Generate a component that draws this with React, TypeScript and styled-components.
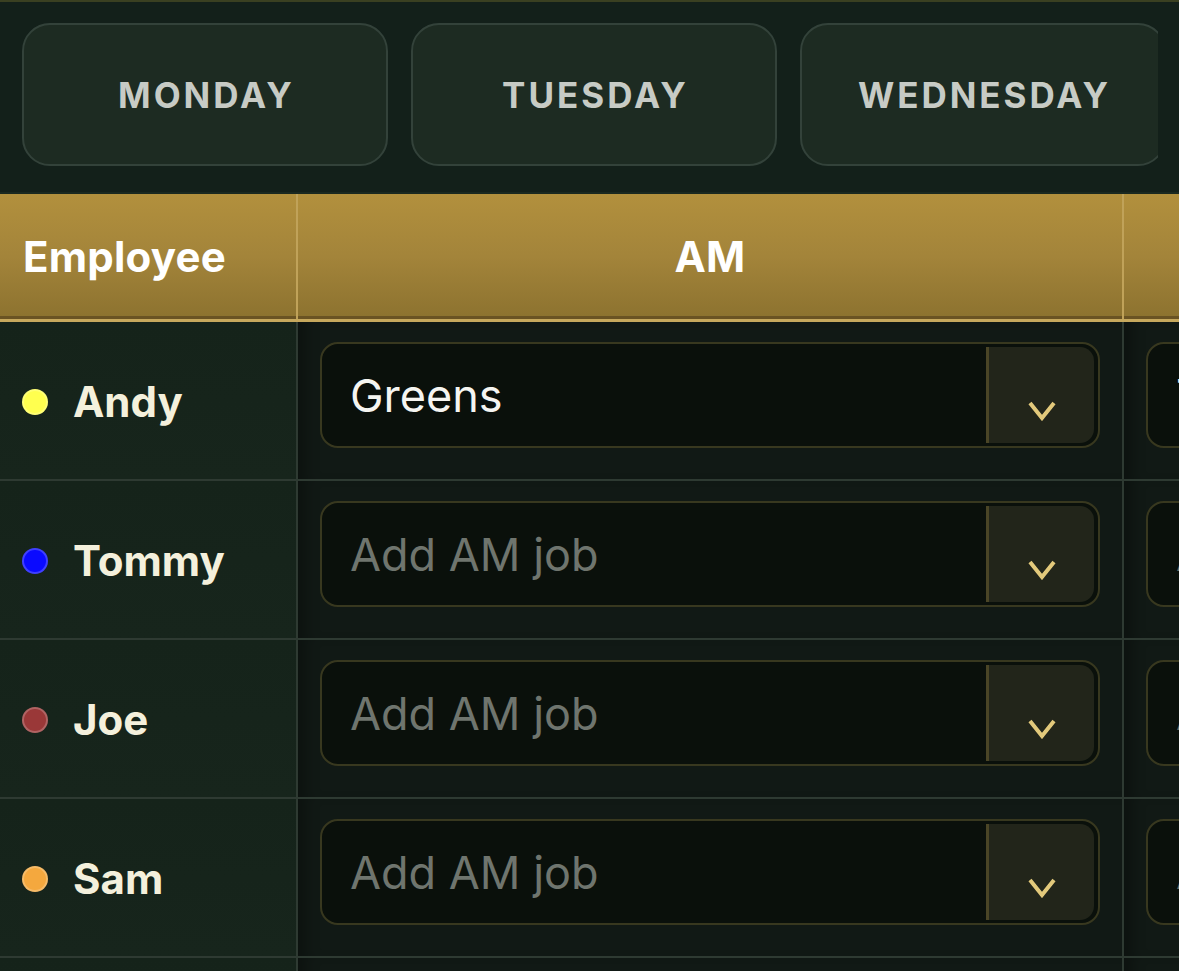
import React from "react";
import styled, { createGlobalStyle } from "styled-components";

const GlobalStyle = createGlobalStyle`
  html, body {
    margin: 0;
    padding: 0;
    background: #111915;
    font-family: "Inter", "Liberation Sans", sans-serif;
  }
  * {
    box-sizing: border-box;
  }
`;

const Page = styled.div`
  width: 1179px;
  height: 971px;
  overflow: hidden;
  background: #111915;
`;

const DayBar = styled.div`
  border-top: 2px solid #3a4021;
  border-bottom: 2px solid #1b2920;
  background: #13201a;
  padding: 21px 21px 26px 22px;
`;

const DayTabs = styled.div`
  display: flex;
  gap: 23px;
  overflow: hidden;
`;

const DayTab = styled.button`
  flex: 0 0 366px;
  height: 143px;
  border-radius: 28px;
  border: 2px solid #33423a;
  background: #1d2b22;
  color: #c7cbc5;
  font-family: "Inter", "Liberation Sans", sans-serif;
  font-weight: 700;
  font-size: 35px;
  letter-spacing: 0.085em;
  text-transform: uppercase;
  display: flex;
  align-items: center;
  justify-content: center;
  padding: 0 0 0 3px;
`;

const Table = styled.div`
  width: 1950px;
`;

const Row = styled.div`
  display: grid;
  grid-template-columns: 298px 826px 826px;
`;

const HeaderRow = styled(Row)`
  height: 128px;
  background: linear-gradient(180deg, #b2903d 0%, #a3843a 50%, #8c722f 100%);
  border-bottom: 3px solid #c6a85d;
  box-shadow: inset 0 -3px 0 #6a5323;
`;

const HeaderCell = styled.div<{ $center?: boolean }>`
  display: flex;
  align-items: center;
  justify-content: ${(p) => (p.$center ? "center" : "flex-start")};
  padding: 0 ${(p) => (p.$center ? "0" : "23px")};
  border-right: 2px solid #c0a259;
  color: #ffffff;
  font-weight: 700;
  font-size: 42px;
  letter-spacing: 0.2px;
`;

const BodyRow = styled(Row)`
  height: 159px;
  border-bottom: 2px solid #2e3a32;
`;

const EmployeeCell = styled.div`
  display: flex;
  align-items: center;
  gap: 26px;
  padding: 2px 0 0 22px;
  background: linear-gradient(180deg, #15231a 0%, #17251c 100%);
  border-right: 2px solid #2e3a32;
`;

const Dot = styled.span<{ $color: string }>`
  width: 26px;
  height: 26px;
  border-radius: 50%;
  background: ${(p) => p.$color};
  border: 2px solid rgba(255, 255, 255, 0.22);
  flex-shrink: 0;
`;

const Name = styled.span`
  color: #f4f0dc;
  font-weight: 700;
  font-size: 42px;
  margin-left: -1px;
`;

const JobCell = styled.div`
  padding: 20px 22px 31px;
  background: #111915;
  border-right: 2px solid #2e3a32;
  box-shadow: inset 16px 0 14px -8px rgba(0, 0, 0, 0.28);
`;

const Select = styled.div`
  height: 106px;
  display: flex;
  border: 2px solid #38381f;
  border-radius: 18px;
  background: #0a100b;
  overflow: hidden;
`;

const SelectValue = styled.div<{ $placeholder?: boolean }>`
  flex: 1;
  display: flex;
  align-items: center;
  padding: 0 0 0 28px;
  white-space: nowrap;
  overflow: hidden;
  font-size: 45px;
  font-weight: 400;
  color: ${(p) => (p.$placeholder ? "#6f756e" : "#f5f5f1")};
`;

const ChevronButton = styled.div`
  flex: 0 0 108px;
  margin: 3px 4px 3px 0;
  border-left: 3px solid #4a4526;
  border-radius: 0 14px 14px 0;
  background: #22251a;
  display: flex;
  align-items: flex-end;
  justify-content: center;
  padding-bottom: 22px;
`;

const Chevron = () => (
  <svg width="28" height="20" viewBox="0 0 28 20" fill="none">
    <polyline
      points="2,2 14,17 26,2"
      stroke="#e2c97b"
      strokeWidth="4"
      strokeLinecap="butt"
      strokeLinejoin="miter"
    />
  </svg>
);

type Employee = { name: string; color: string; am?: string; pm?: string };

const employees: Employee[] = [
  { name: "Andy", color: "#ffff4f", am: "Greens", pm: "Tees" },
  { name: "Tommy", color: "#0a0aff" },
  { name: "Joe", color: "#9a3838" },
  { name: "Sam", color: "#f4a83e" },
  { name: "Mike", color: "#3fb56a" },
];

const days = ["Monday", "Tuesday", "Wednesday", "Thursday", "Friday"];

const JobSelect = ({ value, shift }: { value?: string; shift: string }) => (
  <Select>
    <SelectValue $placeholder={!value}>{value ?? `Add ${shift} job`}</SelectValue>
    <ChevronButton>
      <Chevron />
    </ChevronButton>
  </Select>
);

const App = () => {
  return (
    <Page>
      <GlobalStyle />
      <DayBar>
        <DayTabs>
          {days.map((d) => (
            <DayTab key={d}>{d}</DayTab>
          ))}
        </DayTabs>
      </DayBar>
      <Table>
        <HeaderRow>
          <HeaderCell>Employee</HeaderCell>
          <HeaderCell $center>AM</HeaderCell>
          <HeaderCell $center>PM</HeaderCell>
        </HeaderRow>
        {employees.map((e) => (
          <BodyRow key={e.name}>
            <EmployeeCell>
              <Dot $color={e.color} />
              <Name>{e.name}</Name>
            </EmployeeCell>
            <JobCell>
              <JobSelect value={e.am} shift="AM" />
            </JobCell>
            <JobCell>
              <JobSelect value={e.pm} shift="PM" />
            </JobCell>
          </BodyRow>
        ))}
      </Table>
    </Page>
  );
};

export default App;
